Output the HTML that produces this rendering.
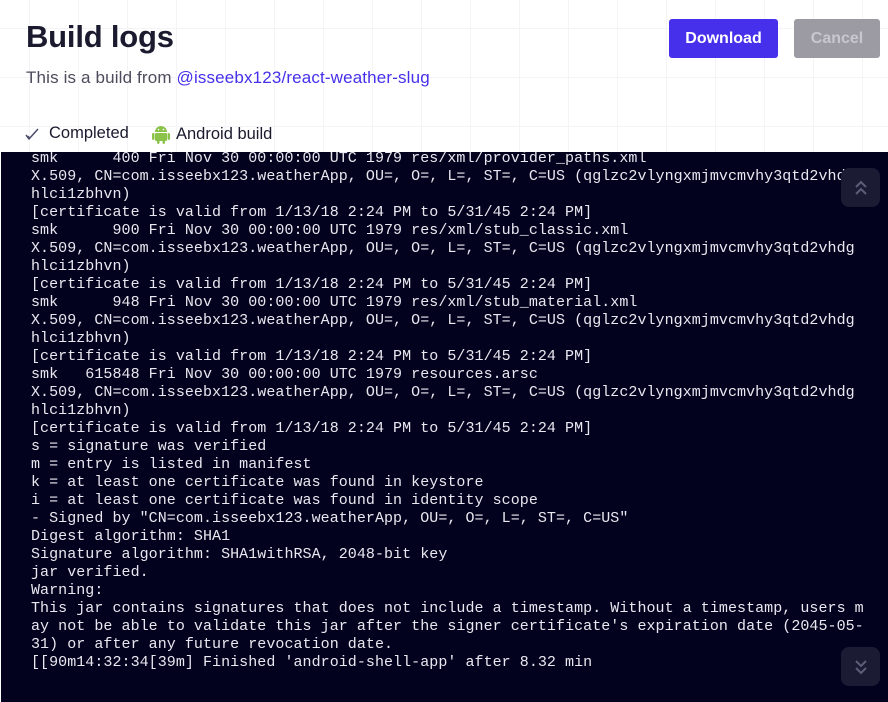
<!DOCTYPE html>
<html><head><meta charset="utf-8"><style>
*{margin:0;padding:0;box-sizing:border-box}
body{width:888px;height:702px;overflow:hidden;background:#fff;font-family:"Liberation Sans",sans-serif;position:relative}
.grid{position:absolute;left:0;top:0;width:888px;height:152px;background-image:linear-gradient(#f4f4f6 1px,transparent 1px),linear-gradient(90deg,#f4f4f6 1px,transparent 1px);background-size:49px 49px;background-position:0 28px,29px 0}
h1{position:absolute;left:26px;top:19px;font-size:31px;font-weight:600;color:#1b1a2e;letter-spacing:-0.2px}
.sub{position:absolute;left:26px;top:68px;font-size:17px;letter-spacing:0.15px;color:#4d4c5c}
.sub a{color:#4630eb;text-decoration:none}
.btn{position:absolute;top:19px;height:39px;border-radius:3px;font-size:16px;font-weight:bold;display:flex;align-items:center;justify-content:center}
.dl{left:669px;width:109px;background:#4630eb;color:#fff}
.cc{left:794px;width:86px;background:#9c9ba4;color:#c8c7ce}
.st{position:absolute;top:124px;font-size:16.5px;color:#1b1a2e;display:flex;align-items:center}
.term{position:absolute;left:1px;top:152px;width:887px;height:550px;background:#03021e;overflow:hidden}
pre{position:absolute;left:30px;top:-2px;font-family:"Liberation Mono",monospace;font-size:15px;line-height:18px;color:#e8e8f0;letter-spacing:0.05px;white-space:pre}
.sb{position:absolute;left:840px;width:39px;height:39px;border-radius:8px;background:#1c1b34;display:flex;align-items:center;justify-content:center}
</style></head><body>
<div class="grid"></div>
<h1>Build logs</h1>
<div class="sub">This is a build from <a>@isseebx123/react-weather-slug</a></div>
<div class="btn dl">Download</div>
<div class="btn cc">Cancel</div>
<div class="st" style="left:25px"><svg width="16" height="14" viewBox="0 0 16 14"><path d="M1 8 L4 12 L13 2" stroke="#4a4a6a" stroke-width="1.5" fill="none"/><path d="M3 9 L5 11" stroke="#4a4a6a" stroke-width="1" fill="none"/></svg><span style="margin-left:8px">Completed</span></div>
<div class="st" style="left:152px"><svg width="18" height="20" viewBox="0 0 18 20"><path d="M3 8 A6 6 0 0 1 15 8 Z" fill="#8bc34a"/><rect x="3" y="9" width="12" height="8" rx="1" fill="#8bc34a"/><rect x="0" y="9" width="2.5" height="7" rx="1.2" fill="#8bc34a"/><rect x="15.5" y="9" width="2.5" height="7" rx="1.2" fill="#8bc34a"/><rect x="5" y="16" width="2.5" height="4" rx="1.2" fill="#8bc34a"/><rect x="10.5" y="16" width="2.5" height="4" rx="1.2" fill="#8bc34a"/><circle cx="6.5" cy="5.5" r="0.8" fill="#fff"/><circle cx="11.5" cy="5.5" r="0.8" fill="#fff"/></svg><span style="margin-left:6px">Android build</span></div>
<div class="term">
<pre>smk      400 Fri Nov 30 00:00:00 UTC 1979 res/xml/provider_paths.xml
X.509, CN=com.isseebx123.weatherApp, OU=, O=, L=, ST=, C=US (qglzc2vlyngxmjmvcmvhy3qtd2vhdg
hlci1zbhvn)
[certificate is valid from 1/13/18 2:24 PM to 5/31/45 2:24 PM]
smk      900 Fri Nov 30 00:00:00 UTC 1979 res/xml/stub_classic.xml
X.509, CN=com.isseebx123.weatherApp, OU=, O=, L=, ST=, C=US (qglzc2vlyngxmjmvcmvhy3qtd2vhdg
hlci1zbhvn)
[certificate is valid from 1/13/18 2:24 PM to 5/31/45 2:24 PM]
smk      948 Fri Nov 30 00:00:00 UTC 1979 res/xml/stub_material.xml
X.509, CN=com.isseebx123.weatherApp, OU=, O=, L=, ST=, C=US (qglzc2vlyngxmjmvcmvhy3qtd2vhdg
hlci1zbhvn)
[certificate is valid from 1/13/18 2:24 PM to 5/31/45 2:24 PM]
smk   615848 Fri Nov 30 00:00:00 UTC 1979 resources.arsc
X.509, CN=com.isseebx123.weatherApp, OU=, O=, L=, ST=, C=US (qglzc2vlyngxmjmvcmvhy3qtd2vhdg
hlci1zbhvn)
[certificate is valid from 1/13/18 2:24 PM to 5/31/45 2:24 PM]
s = signature was verified
m = entry is listed in manifest
k = at least one certificate was found in keystore
i = at least one certificate was found in identity scope
- Signed by "CN=com.isseebx123.weatherApp, OU=, O=, L=, ST=, C=US"
Digest algorithm: SHA1
Signature algorithm: SHA1withRSA, 2048-bit key
jar verified.
Warning:
This jar contains signatures that does not include a timestamp. Without a timestamp, users m
ay not be able to validate this jar after the signer certificate's expiration date (2045-05-
31) or after any future revocation date.
[[90m14:32:34[39m] Finished 'android-shell-app' after 8.32 min</pre>
<div class="sb" style="top:16px"><svg width="14" height="16" viewBox="0 0 14 16"><path d="M2 7 L7 2 L12 7 M2 14 L7 9 L12 14" stroke="#5e5d78" stroke-width="2" fill="none"/></svg></div>
<div class="sb" style="top:495px"><svg width="14" height="16" viewBox="0 0 14 16"><path d="M2 2 L7 7 L12 2 M2 9 L7 14 L12 9" stroke="#5e5d78" stroke-width="2" fill="none"/></svg></div>
</div>
</body></html>
